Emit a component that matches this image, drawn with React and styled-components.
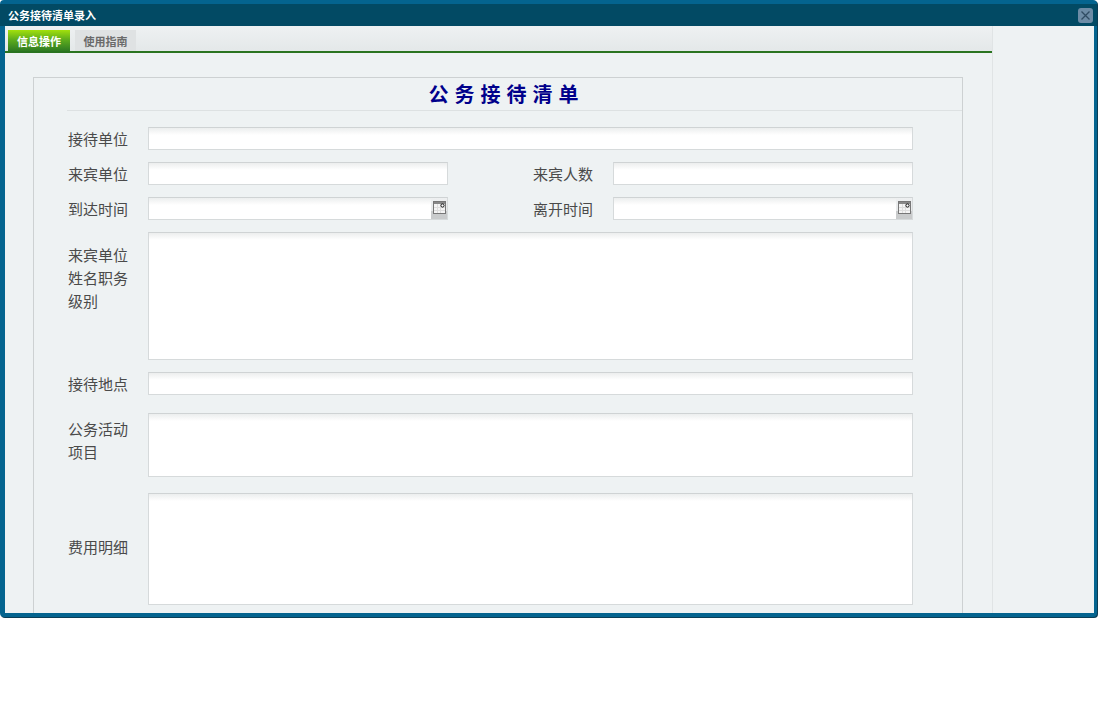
import React from 'react'
import styled, { createGlobalStyle } from 'styled-components'

const Global = createGlobalStyle`
  html, body { margin: 0; padding: 0; background: #fff; }
  body { font-family: "Liberation Sans", "Noto Sans CJK SC", sans-serif; }
`

const Page = styled.div`
  width: 1098px;
  height: 714px;
  overflow: hidden;
`

const Win = styled.div`
  width: 1097px;
  height: 617px;
  box-sizing: border-box;
  border: 4px solid #04648f;
  border-right-width: 3px;
  border-radius: 4px;
  box-shadow: 1px 1px 0 #0b3d55;
  display: flex;
  flex-direction: column;
  background: #04648f;
`

const TitleBar = styled.div`
  height: 22px;
  flex: none;
  margin: 0 -3px 0 -4px;
  padding: 0 4px 0 8px;
  background: #024a64;
  display: flex;
  align-items: center;
  justify-content: space-between;
  color: #fff;
  font-size: 11px;
  font-weight: bold;
`

const CloseBtn = styled.div`
  width: 15px;
  height: 15px;
  border-radius: 3px;
  background: #6d8ca6;
  display: flex;
  align-items: center;
  justify-content: center;
`

const Body = styled.div`
  flex: 1;
  min-height: 0;
  margin-left: 1px;
  background: #eef2f3;
  display: flex;
  overflow: hidden;
`

const Main = styled.div`
  width: 988px;
  flex: none;
  box-sizing: border-box;
  border-right: 1px solid #e0e4e5;
  display: flex;
  flex-direction: column;
`

const TabStrip = styled.div`
  height: 27px;
  flex: none;
  box-sizing: border-box;
  padding: 4px 0 0 3px;
  border-bottom: 2px solid #2a7420;
  background: linear-gradient(#eef1f2, #e4e8e9);
  display: flex;
  gap: 5px;
`

const Tab = styled.div`
  height: 21px;
  display: flex;
  align-items: center;
  justify-content: center;
  font-size: 11px;
  font-weight: bold;
  ${p => p.$active
    ? `width: 62px; color: #fff; background: linear-gradient(#a2e00c, #5fae1c 45%, #2e7a23); `
    : `width: 61px; color: #6a6a6a; background: #dfe2e3; `}
`

const Panel = styled.div`
  flex: 1;
  min-height: 0;
  margin: 24px 29px 0 28px;
  border: 1px solid #cdd1d2;
  border-bottom: 0;
  box-sizing: border-box;
  padding-left: 33px;
`

const Heading = styled.h1`
  margin: 0;
  height: 29px;
  padding: 3px 16px 0 0;
  border-bottom: 1px solid #dde1e2;
  display: flex;
  align-items: center;
  justify-content: center;
  color: #00008b;
  font-size: 20px;
  line-height: 29px;
  letter-spacing: 6px;
  font-weight: bold;
`

const Form = styled.div`
  padding: 16px 0 0 1px;
  width: 845px;
  display: flex;
  flex-direction: column;
`

const Row = styled.div`
  display: flex;
  align-items: ${p => p.$align || 'center'};
  margin-bottom: ${p => p.$gap ?? 12}px;
`

const Label = styled.div`
  width: 80px;
  flex: none;
  font-size: 15px;
  line-height: 23px;
  color: #4a4a4a;
  padding-top: ${p => p.$top || 0}px;
  box-sizing: border-box;
`

const LineLabel = styled(Label)`
  height: 23px;
  line-height: 25px;
`

const SideLabel = styled(LineLabel)`
  margin-left: 85px;
`

const Field = styled.div`
  box-sizing: border-box;
  width: ${p => p.$width}px;
  height: ${p => p.$height || 23}px;
  flex: none;
  border: 1px solid #d6dadb;
  border-top-color: #cfd3d4;
  background: linear-gradient(#eceeee, #fff 7px);
  display: flex;
  justify-content: flex-end;
`

const DateBtn = styled.div`
  width: 16px;
  height: 100%;
  background: linear-gradient(#eef0f1 0, #e6e8e9 60%, #c9cbcc 60%);
  display: flex;
  justify-content: center;
  padding-top: 3px;
  box-sizing: border-box;
`

const CalendarIcon = () => (
  <svg width="13" height="13" viewBox="0 0 13 13">
    <rect x="0.5" y="0.5" width="12" height="12" fill="#f4f4f4" stroke="#777" />
    <rect x="1" y="1" width="11" height="2" fill="#888" />
    <path d="M1 6.5h11M1 9.5h11M4.5 3v9M7.5 3v9" stroke="#ddd" />
    <circle cx="9.5" cy="4.5" r="1.6" fill="#fff" stroke="#111" />
  </svg>
)

const DateField = ({ width }) => (
  <Field $width={width}>
    <DateBtn><CalendarIcon /></DateBtn>
  </Field>
)

const App = () => (
  <Page>
    <Global />
    <Win>
      <TitleBar>
        公务接待清单录入
        <CloseBtn>
          <svg width="11" height="11" viewBox="0 0 11 11">
            <path d="M1.5 1.5l8 8M9.5 1.5l-8 8" stroke="#2f4c63" strokeWidth="1.3" />
          </svg>
        </CloseBtn>
      </TitleBar>
      <Body>
        <Main>
          <TabStrip>
            <Tab $active>信息操作</Tab>
            <Tab>使用指南</Tab>
          </TabStrip>
          <Panel>
            <Heading>公务接待清单</Heading>
            <Form>
              <Row>
                <LineLabel>接待单位</LineLabel>
                <Field $width={765} />
              </Row>
              <Row>
                <LineLabel>来宾单位</LineLabel>
                <Field $width={300} />
                <SideLabel>来宾人数</SideLabel>
                <Field $width={300} />
              </Row>
              <Row>
                <LineLabel>到达时间</LineLabel>
                <DateField width={300} />
                <SideLabel>离开时间</SideLabel>
                <DateField width={300} />
              </Row>
              <Row $align="flex-start">
                <Label $top={12}>来宾单位<br />姓名职务<br />级别</Label>
                <Field $width={765} $height={128} />
              </Row>
              <Row $gap={18}>
                <LineLabel>接待地点</LineLabel>
                <Field $width={765} />
              </Row>
              <Row $align="flex-start" $gap={16}>
                <Label $top={5}>公务活动<br />项目</Label>
                <Field $width={765} $height={64} />
              </Row>
              <Row $align="flex-start">
                <Label $top={43}>费用明细</Label>
                <Field $width={765} $height={112} />
              </Row>
            </Form>
          </Panel>
        </Main>
      </Body>
    </Win>
  </Page>
)

export default App
